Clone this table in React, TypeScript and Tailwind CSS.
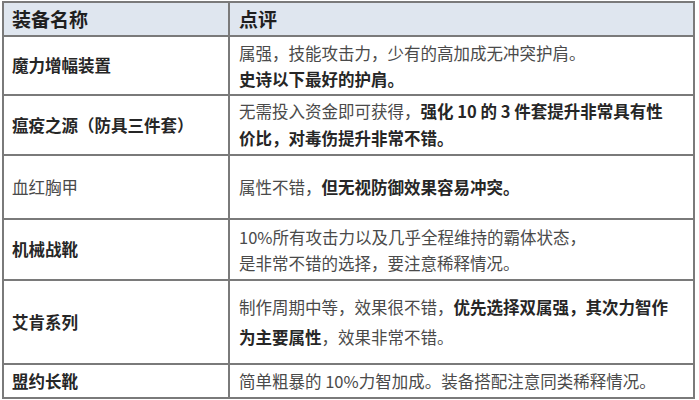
import React from 'react';

type Row = {
  name: string;
  nameBold: boolean;
  height: string;
  leading: string;
  lines: { text: string; bold?: boolean }[][];
};

const rows: Row[] = [
  {
    name: '魔力增幅装置',
    nameBold: true,
    height: 'h-[59px]',
    leading: 'leading-[26px]',
    lines: [
      [{ text: '属强，技能攻击力，少有的高加成无冲突护肩。' }],
      [{ text: '史诗以下最好的护肩。', bold: true }],
    ],
  },
  {
    name: '瘟疫之源（防具三件套）',
    nameBold: true,
    height: 'h-[60px]',
    leading: 'leading-[27px]',
    lines: [
      [
        { text: '无需投入资金即可获得，' },
        { text: '强化 10 的 3 件套提升非常具有性', bold: true },
      ],
      [{ text: '价比，对毒伤提升非常不错。', bold: true }],
    ],
  },
  {
    name: '血红胸甲',
    nameBold: false,
    height: 'h-[64px]',
    leading: 'leading-[26px]',
    lines: [[{ text: '属性不错，' }, { text: '但无视防御效果容易冲突。', bold: true }]],
  },
  {
    name: '机械战靴',
    nameBold: true,
    height: 'h-[61px]',
    leading: 'leading-[26px]',
    lines: [
      [{ text: '10%所有攻击力以及几乎全程维持的霸体状态，' }],
      [{ text: '是非常不错的选择，要注意稀释情况。' }],
    ],
  },
  {
    name: '艾肯系列',
    nameBold: true,
    height: 'h-[84px]',
    leading: 'leading-[30px]',
    lines: [
      [
        { text: '制作周期中等，效果很不错，' },
        { text: '优先选择双属强，其次力智作', bold: true },
      ],
      [{ text: '为主要属性', bold: true }, { text: '，效果非常不错。' }],
    ],
  },
  {
    name: '盟约长靴',
    nameBold: true,
    height: 'h-[34px]',
    leading: 'leading-[26px]',
    lines: [[{ text: '简单粗暴的 10%力智加成。装备搭配注意同类稀释情况。' }]],
  },
];

export default function App() {
  return (
    <div
      className="w-[699px] h-[400px] bg-white pt-[1px] pl-[2px] overflow-hidden"
      style={{ fontFamily: '"Noto Sans CJK SC", "Noto Sans", sans-serif' }}
    >
      <table className="w-[693px] table-fixed border-collapse border-2 border-[#7a7a7a]">
        <colgroup>
          <col className="w-[226px]" />
          <col />
        </colgroup>
        <thead>
          <tr className="h-[34px] bg-[#dfe6ef]">
            <th className="border-2 border-[#7a7a7a] px-[8px] text-left text-[19px] font-bold text-[#1f1f1f]">
              装备名称
            </th>
            <th className="border-2 border-[#7a7a7a] px-[9px] text-left text-[19px] font-bold text-[#1f1f1f]">
              点评
            </th>
          </tr>
        </thead>
        <tbody>
          {rows.map((row) => (
            <tr key={row.name} className={row.height}>
              <td
                className={`border-2 border-[#7a7a7a] px-[8px] align-middle text-[16.5px] whitespace-nowrap ${
                  row.nameBold ? 'font-bold text-[#262626]' : 'font-normal text-[#4a4a4a]'
                }`}
              >
                {row.name}
              </td>
              <td
                className={`border-2 border-[#7a7a7a] px-[9px] align-middle text-[16.5px] whitespace-nowrap text-[#4a4a4a] ${row.leading}`}
              >
                {row.lines.map((line, i) => (
                  <div key={i}>
                    {line.map((seg, j) => (
                      <span key={j} className={seg.bold ? 'font-bold text-[#262626]' : ''}>
                        {seg.text}
                      </span>
                    ))}
                  </div>
                ))}
              </td>
            </tr>
          ))}
        </tbody>
      </table>
    </div>
  );
}
